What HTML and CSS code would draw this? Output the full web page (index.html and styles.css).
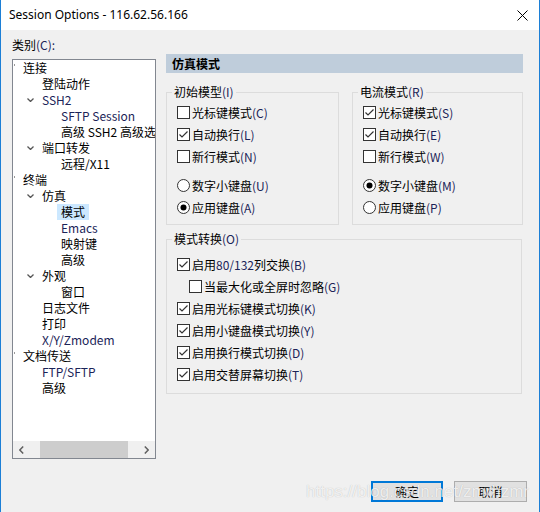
FILE: index.html
```html
<!DOCTYPE html>
<html lang="zh-CN">

<head>
    <meta charset="UTF-8">
    <title>Session Options</title>
    <link rel="stylesheet" href="styles.css">
</head>

<body>
    <div class="window">

        <div class="titlebar">
            <span class="title">Session Options - 116.62.56.166</span>
            <svg class="close" width="11" height="11" viewBox="0 0 11 11">
                <path d="M0.5 0.5 L10.5 10.5 M10.5 0.5 L0.5 10.5" stroke="#000" stroke-width="1" fill="none" />
            </svg>
        </div>

        <div class="main">
            <!-- venstre: kategorier -->
            <div class="left">
                <div class="cat-label">类别<span class="k">(C):</span></div>
                <div class="tree">
                    <div class="tree-list">
                        <div class="row lv0"><i class="dot"></i>连接</div>
                        <div class="row lv1">登陆动作</div>
                        <div class="row lv1 open"><svg class="chev" width="7" height="4" viewBox="0 0 7 4"><polyline points="0.5,0.5 3.5,3.5 6.5,0.5" /></svg><span class="lat">SSH2</span></div>
                        <div class="row lv2 lat">SFTP Session</div>
                        <div class="row lv2">高级 SSH2 高级选项</div>
                        <div class="row lv1 open"><svg class="chev" width="7" height="4" viewBox="0 0 7 4"><polyline points="0.5,0.5 3.5,3.5 6.5,0.5" /></svg>端口转发</div>
                        <div class="row lv2">远程/X11</div>
                        <div class="row lv0"><i class="dot"></i>终端</div>
                        <div class="row lv1 open"><svg class="chev" width="7" height="4" viewBox="0 0 7 4"><polyline points="0.5,0.5 3.5,3.5 6.5,0.5" /></svg>仿真</div>
                        <div class="row lv2"><span class="sel">模式</span></div>
                        <div class="row lv2 lat">Emacs</div>
                        <div class="row lv2">映射键</div>
                        <div class="row lv2">高级</div>
                        <div class="row lv1 open"><svg class="chev" width="7" height="4" viewBox="0 0 7 4"><polyline points="0.5,0.5 3.5,3.5 6.5,0.5" /></svg>外观</div>
                        <div class="row lv2">窗口</div>
                        <div class="row lv1">日志文件</div>
                        <div class="row lv1">打印</div>
                        <div class="row lv1 lat">X/Y/Zmodem</div>
                        <div class="row lv0"><i class="dot"></i>文档传送</div>
                        <div class="row lv1 lat">FTP/SFTP</div>
                        <div class="row lv1">高级</div>
                    </div>
                    <div class="hscroll">
                        <div class="arrow"><svg width="5" height="8" viewBox="0 0 5 8"><polyline points="4.2,0.5 0.8,4 4.2,7.5" /></svg></div>
                        <div class="thumb"></div>
                        <div class="track"></div>
                        <div class="arrow"><svg width="5" height="8" viewBox="0 0 5 8"><polyline points="0.8,0.5 4.2,4 0.8,7.5" /></svg></div>
                    </div>
                </div>
            </div>

            <!-- højre: indstillinger -->
            <div class="right">
                <div class="panel-head">仿真模式</div>

                <div class="groups">
                    <fieldset class="group g1">
                        <legend>初始模型<span class="k">(I)</span></legend>
                        <div class="opt"><svg class="box" viewBox="0 0 13 13"><rect x="0.5" y="0.5" width="12" height="12" /></svg>光标键模式<span class="k">(C)</span></div>
                        <div class="opt"><svg class="box" viewBox="0 0 13 13"><rect x="0.5" y="0.5" width="12" height="12" /><polyline class="tick" points="2.5,6.5 5,9 10.5,3.5" /></svg>自动换行<span class="k">(L)</span></div>
                        <div class="opt"><svg class="box" viewBox="0 0 13 13"><rect x="0.5" y="0.5" width="12" height="12" /></svg>新行模式<span class="k">(N)</span></div>
                        <div class="opt gap"><svg class="box" viewBox="0 0 13 13"><circle cx="6.5" cy="6.5" r="6" /></svg>数字小键盘<span class="k">(U)</span></div>
                        <div class="opt"><svg class="box" viewBox="0 0 13 13"><circle cx="6.5" cy="6.5" r="6" /><circle class="dotin" cx="6.5" cy="6.5" r="3" /></svg>应用键盘<span class="k">(A)</span></div>
                    </fieldset>

                    <fieldset class="group g2">
                        <legend>电流模式<span class="k">(R)</span></legend>
                        <div class="opt"><svg class="box" viewBox="0 0 13 13"><rect x="0.5" y="0.5" width="12" height="12" /><polyline class="tick" points="2.5,6.5 5,9 10.5,3.5" /></svg>光标键模式<span class="k">(S)</span></div>
                        <div class="opt"><svg class="box" viewBox="0 0 13 13"><rect x="0.5" y="0.5" width="12" height="12" /><polyline class="tick" points="2.5,6.5 5,9 10.5,3.5" /></svg>自动换行<span class="k">(E)</span></div>
                        <div class="opt"><svg class="box" viewBox="0 0 13 13"><rect x="0.5" y="0.5" width="12" height="12" /></svg>新行模式<span class="k">(W)</span></div>
                        <div class="opt gap"><svg class="box" viewBox="0 0 13 13"><circle cx="6.5" cy="6.5" r="6" /><circle class="dotin" cx="6.5" cy="6.5" r="3" /></svg>数字小键盘<span class="k">(M)</span></div>
                        <div class="opt"><svg class="box" viewBox="0 0 13 13"><circle cx="6.5" cy="6.5" r="6" /></svg>应用键盘<span class="k">(P)</span></div>
                    </fieldset>
                </div>

                <fieldset class="group g3">
                    <legend>模式转换<span class="k">(O)</span></legend>
                    <div class="opt"><svg class="box" viewBox="0 0 13 13"><rect x="0.5" y="0.5" width="12" height="12" /><polyline class="tick" points="2.5,6.5 5,9 10.5,3.5" /></svg>启用<span class="k">80/132</span>列交换<span class="k">(B)</span></div>
                    <div class="opt sub"><svg class="box" viewBox="0 0 13 13"><rect x="0.5" y="0.5" width="12" height="12" /></svg>当最大化或全屏时忽略<span class="k">(G)</span></div>
                    <div class="opt"><svg class="box" viewBox="0 0 13 13"><rect x="0.5" y="0.5" width="12" height="12" /><polyline class="tick" points="2.5,6.5 5,9 10.5,3.5" /></svg>启用光标键模式切换<span class="k">(K)</span></div>
                    <div class="opt"><svg class="box" viewBox="0 0 13 13"><rect x="0.5" y="0.5" width="12" height="12" /><polyline class="tick" points="2.5,6.5 5,9 10.5,3.5" /></svg>启用小键盘模式切换<span class="k">(Y)</span></div>
                    <div class="opt"><svg class="box" viewBox="0 0 13 13"><rect x="0.5" y="0.5" width="12" height="12" /><polyline class="tick" points="2.5,6.5 5,9 10.5,3.5" /></svg>启用换行模式切换<span class="k">(D)</span></div>
                    <div class="opt"><svg class="box" viewBox="0 0 13 13"><rect x="0.5" y="0.5" width="12" height="12" /><polyline class="tick" points="2.5,6.5 5,9 10.5,3.5" /></svg>启用交替屏幕切换<span class="k">(T)</span></div>
                </fieldset>
            </div>
        </div>

        <div class="buttons">
            <div class="btn default">确定</div>
            <div class="btn cancel">取消</div>
        </div>

        <div class="watermark">https://blog.csdn.net/zmrhzmr</div>
    </div>
</body>

</html>
```

FILE: styles.css
```css
* {
    box-sizing: border-box;
}

html,
body {
    margin: 0;
}

body {
    width: 540px;
    height: 512px;
    overflow: hidden;
    font-family: "Noto Sans CJK SC", sans-serif;
    font-size: 12px;
    color: #000;
}

.window {
    position: relative;
    width: 540px;
    height: 512px;
    background-color: #f0f0f0;
    border-left: 1px solid #1c7fd6;
    border-right: 1px solid #1c7fd6;
}

.titlebar {
    height: 30px;
    background-color: #fff;
    display: flex;
    align-items: center;
    justify-content: space-between;
    padding: 0 11px 0 8px;
}

.title {
    font-family: "Noto Sans", sans-serif;
    font-size: 12px;
    line-height: 16px;
}

.k,
.lat {
    color: #1b2458;
}

.main {
    display: grid;
    grid-template-columns: 144px 357px;
    column-gap: 10px;
    padding-left: 11px;
}

.cat-label {
    margin-top: 7px;
    height: 16px;
    line-height: 16px;
}

.tree {
    margin-top: 6px;
    height: 400px;
    background-color: #fff;
    border: 1px solid #828790;
    display: flex;
    flex-direction: column;
    overflow: hidden;
}

.tree-list {
    flex: 1;
    overflow: hidden;
}

.row {
    height: 16px;
    line-height: 16px;
    display: flex;
    align-items: center;
    white-space: nowrap;
}

.lv0 {
    padding-left: 1px;
}

.lv1 {
    padding-left: 29px;
}

.lv1.open {
    padding-left: 14px;
}

.lv2 {
    padding-left: 48px;
}

.dot {
    width: 1px;
    height: 2px;
    background-color: #999;
    margin-right: 8px;
    margin-top: -6px;
}

.chev {
    margin-right: 8px;
    fill: none;
    stroke: #555;
    stroke-width: 1.3;
}

.sel {
    margin-left: -4px;
    padding: 0 4px;
    background-color: #cce8ff;
}

.hscroll {
    height: 17px;
    background-color: #f0f0f0;
    display: flex;
}

.arrow {
    width: 17px;
    height: 17px;
    display: flex;
    align-items: center;
    justify-content: center;
}

.arrow svg {
    fill: none;
    stroke: #606060;
    stroke-width: 1.5;
}

.thumb {
    margin-left: 10px;
    width: 88px;
    background-color: #cdcdcd;
}

.track {
    flex: 1;
}

.right {
    padding-top: 24px;
}

.panel-head {
    height: 19px;
    line-height: 19px;
    background-color: #bfcddb;
    font-weight: bold;
    padding-left: 6px;
}

.groups {
    display: flex;
    gap: 13px;
    margin-top: 11px;
}

.group {
    margin: 0;
    min-width: 0;
    border: 1px solid #dcdcdc;
    padding: 1px 0 6px 5px;
}

.group legend {
    padding: 0 2px;
    height: 16px;
    line-height: 16px;
}

.g1 {
    width: 173px;
}

.g2 {
    width: 171px;
}

.g3 {
    width: 356px;
    margin-top: 6px;
    padding-top: 6px;
    padding-bottom: 8px;
}

.opt {
    height: 22px;
    display: flex;
    align-items: center;
    padding-left: 5px;
    white-space: nowrap;
}

.opt.gap {
    margin-top: 7px;
}

.opt.sub {
    padding-left: 17px;
}

.box {
    width: 13px;
    height: 13px;
    margin-right: 2px;
    flex-shrink: 0;
}

.box rect,
.box circle {
    fill: #fff;
    stroke: #333;
    stroke-width: 1;
}

.box .tick {
    fill: none;
    stroke: #333;
    stroke-width: 1.2;
}

.box .dotin {
    fill: #000;
    stroke: none;
}

.buttons {
    display: flex;
    justify-content: flex-end;
    gap: 11px;
    padding-right: 12px;
    margin-top: 22px;
}

.btn {
    width: 72px;
    height: 21px;
    display: flex;
    align-items: center;
    justify-content: center;
    background-color: #e1e1e1;
    border: 1px solid #adadad;
}

.btn.default {
    border: 2px solid #0078d7;
}

.btn.cancel {
    width: 73px;
}

.watermark {
    position: absolute;
    left: 305px;
    top: 482px;
    font-family: "Liberation Sans", sans-serif;
    font-size: 17px;
    line-height: 20px;
    color: rgba(255, 255, 255, 0.8);
    text-shadow: 0 0 1px rgba(0, 0, 0, 0.25);
    pointer-events: none;
}
```
